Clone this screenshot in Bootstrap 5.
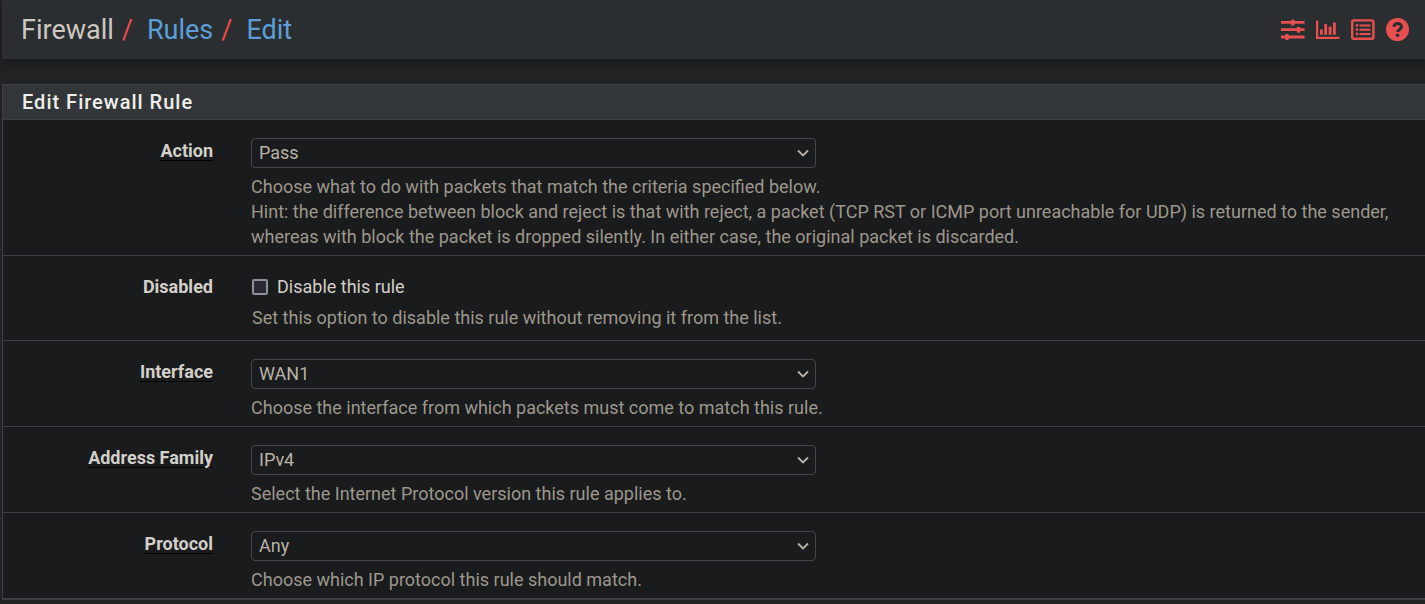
<!DOCTYPE html>
<html lang="en">
<head>
<meta charset="utf-8">
<meta name="viewport" content="width=device-width, initial-scale=1">
<title>Firewall: Rules: Edit</title>
<link href="https://cdn.jsdelivr.net/npm/bootstrap@5.3.0/dist/css/bootstrap.min.css" rel="stylesheet">
<style>
  body { background: #212224; color: #d3cfc9; font-family: Roboto, sans-serif; font-size: 18px; line-height: 25px; padding-left: 2px; }
  a { text-decoration: none; }
  .page-head { background: #2a2e31; height: 59px; padding: 0 15px 0 19px; margin-bottom: 25px; box-shadow: 0 4px 12px rgba(0, 0, 0, .3); }
  .crumbs { font-size: 27px; line-height: 34px; color: #cdc8c0; }
  .crumbs a { color: #5c9fd8; }
  .crumbs li + li::before { content: "/"; color: #ee4b4b; padding: 0 14px 0 8px; }
  .tools { gap: 11px; }
  .tools a { color: #e8504f; }
  .tools svg { display: block; width: 24px; height: 24px; fill: currentColor; }
  .rule-panel { border: 1px solid #3d4042; border-width: 1px 0 2px 1px; background: #1a1b1c; }
  .rule-title { background: #323638; color: #f0eeea; border-bottom: 1px solid #3d4042; margin: 0; padding: 4px 19px; font-size: 20px; font-weight: 500; line-height: 26px; letter-spacing: 1px; }
  .rule-row { padding: 18px 0 6px; }
  .rule-row + .rule-row { border-top: 1px solid #3d4042; }
  .rule-row.check-row { padding-bottom: 10px; }
  .rule-label { padding-right: 27px; font-weight: 700; }
  .required { text-decoration: underline #000 1px; text-underline-offset: 3px; text-decoration-skip-ink: none; }
  .rule-field { padding: 0 16px 0 11px; }
  .help { color: #9d978c; margin: 6px 0 0; }
  .form-select.rule-select {
    width: calc(50% - 14px); height: 30px; padding: 0 30px 0 7px; font-size: 18px; line-height: 28px; color: #b8b2a8;
    background-color: #1a1b1c; border: 1px solid #45484a; border-radius: 4px;
    background-image: url("data:image/svg+xml,%3Csvg xmlns='http://www.w3.org/2000/svg' viewBox='0 0 12 8'%3E%3Cpath d='M1 1.5l5 5 5-5' fill='none' stroke='%23b8b2a8' stroke-width='1.8'/%3E%3C/svg%3E");
    background-size: 12px 8px; background-position: right 6px center;
  }
  .rule-check { appearance: none; width: 16px; height: 16px; margin: 0 9px 0 1px; border: 2px solid #8f8f9d; border-radius: 2px; background: #2b2a33; }
  .rule-check:checked { background: #5c9fd8; }
  .check-row .help { padding-left: 1px; }
</style>
</head>
<body>
<header class="page-head d-flex align-items-center justify-content-between">
  <nav aria-label="breadcrumb">
    <ol class="crumbs list-unstyled d-flex m-0">
      <li>Firewall</li>
      <li><a href="#rules">Rules</a></li>
      <li><a href="#edit">Edit</a></li>
    </ol>
  </nav>
  <div class="tools d-flex">
    <a href="#advanced" aria-label="Advanced options"><svg viewBox="0 0 24 24"><path d="M0 3h23.500v2.800H0zM0 10.300h23.500v2.800H0zM0 17.600h23.500v2.800H0z"/><rect x="10" y="1.400" width="3.400" height="6" rx="1"/><rect x="15.800" y="8.700" width="3.400" height="6" rx="1"/><rect x="4.300" y="16" width="3.400" height="6" rx="1"/></svg></a>
    <a href="#status" aria-label="Status graph"><svg viewBox="0 0 24 24"><path d="M0 2.500h2.200v16.200H23.500V21H0zM4 11.500h2.800v5.200H4zM8.300 6h2.800v10.700H8.300zM12.700 8.500h2.800v8.200h-2.800zM17 4.500h2.800v12.200H17z"/></svg></a>
    <a href="#log" aria-label="Log entries"><svg viewBox="0 0 24 24"><rect x="1.200" y="2.400" width="21.200" height="18.400" rx="1.500" fill="none" stroke="currentColor" stroke-width="2.400"/><circle cx="6" cy="7.400" r="1.400"/><circle cx="6" cy="11.700" r="1.400"/><circle cx="6" cy="16" r="1.400"/><path d="M8.500 6.400h11v2h-11zM8.500 10.700h11v2h-11zM8.500 15h11v2h-11z"/></svg></a>
    <a href="#help" aria-label="Help"><svg viewBox="0 0 24 24"><circle cx="11.500" cy="11.500" r="11.500"/><path d="M7.700 8.700Q8.700 5.500 11.700 5.500t3.800 3q0 1.800-1.900 2.800-1.900 1-1.900 2.700" fill="none" stroke="#2a2e31" stroke-width="3"/><circle cx="11.600" cy="17.300" r="1.800" fill="#2a2e31"/></svg></a>
  </div>
</header>
<main>
  <form class="rule-panel">
    <h2 class="rule-title">Edit Firewall Rule</h2>
    <div class="rule-row row g-0">
      <label class="rule-label col-2 text-end" for="action"><span class="required">Action</span></label>
      <div class="rule-field col-10">
        <select class="form-select rule-select" id="action"><option>Pass</option><option>Block</option><option>Reject</option></select>
        <p class="help">Choose what to do with packets that match the criteria specified below.<br>Hint: the difference between block and reject is that with reject, a packet (TCP RST or ICMP port unreachable for UDP) is returned to the sender, whereas with block the packet is dropped silently. In either case, the original packet is discarded.</p>
      </div>
    </div>
    <div class="rule-row check-row row g-0">
      <div class="rule-label col-2 text-end">Disabled</div>
      <div class="rule-field col-10">
        <label class="d-flex align-items-center" for="disabled"><input class="rule-check" type="checkbox" id="disabled">Disable this rule</label>
        <p class="help">Set this option to disable this rule without removing it from the list.</p>
      </div>
    </div>
    <div class="rule-row row g-0">
      <label class="rule-label col-2 text-end" for="interface"><span class="required">Interface</span></label>
      <div class="rule-field col-10">
        <select class="form-select rule-select" id="interface"><option>WAN1</option><option>LAN</option></select>
        <p class="help">Choose the interface from which packets must come to match this rule.</p>
      </div>
    </div>
    <div class="rule-row row g-0">
      <label class="rule-label col-2 text-end" for="family"><span class="required">Address Family</span></label>
      <div class="rule-field col-10">
        <select class="form-select rule-select" id="family"><option>IPv4</option><option>IPv6</option></select>
        <p class="help">Select the Internet Protocol version this rule applies to.</p>
      </div>
    </div>
    <div class="rule-row row g-0">
      <label class="rule-label col-2 text-end" for="protocol"><span class="required">Protocol</span></label>
      <div class="rule-field col-10">
        <select class="form-select rule-select" id="protocol"><option>Any</option><option>TCP</option><option>UDP</option></select>
        <p class="help">Choose which IP protocol this rule should match.</p>
      </div>
    </div>
  </form>
</main>
<script src="https://cdn.jsdelivr.net/npm/bootstrap@5.3.0/dist/js/bootstrap.bundle.min.js"></script>
</body>
</html>
